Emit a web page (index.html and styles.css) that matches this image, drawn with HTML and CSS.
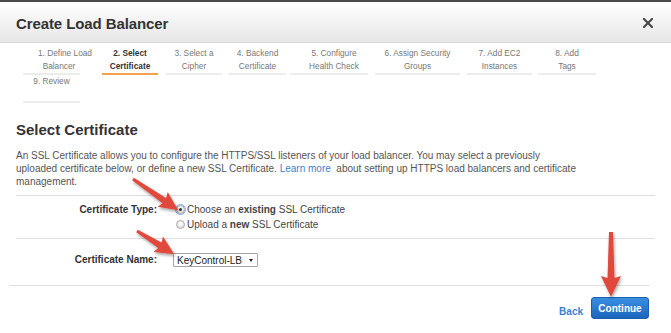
FILE: index.html
```html
<!DOCTYPE html>
<html lang="en">
<head>
<meta charset="utf-8">
<title>Create Load Balancer</title>
<link rel="stylesheet" href="styles.css">
</head>
<body>
<div class="modal">
  <header class="header">
    <h1 class="title">Create Load Balancer</h1>
    <button class="close" aria-label="Close">
      <svg width="10" height="10" viewBox="0 0 10 10"><path d="M1 1 L9 9 M9 1 L1 9" stroke="#444" stroke-width="2" stroke-linecap="square"/></svg>
    </button>
  </header>

  <nav class="steps">
    <div class="step">1. Define Load<br>Balancer</div>
    <div class="step active">2. Select<br>Certificate</div>
    <div class="step">3. Select a<br>Cipher</div>
    <div class="step">4. Backend<br>Certificate</div>
    <div class="step">5. Configure<br>Health Check</div>
    <div class="step">6. Assign Security<br>Groups</div>
    <div class="step">7. Add EC2<br>Instances</div>
    <div class="step">8. Add<br>Tags</div>
    <div class="step">9. Review</div>
  </nav>

  <main class="content">
    <h2 class="section-title">Select Certificate</h2>
    <p class="intro">An SSL Certificate allows you to configure the HTTPS/SSL listeners of your load balancer. You may select a previously<br>uploaded certificate below, or define a new SSL Certificate. <a class="link" href="#">Learn more</a>&nbsp; about setting up HTTPS load balancers and certificate<br>management.</p>

    <div class="form">
      <div class="form-row type-row">
        <div class="label">Certificate Type:</div>
        <div class="field">
          <div class="radio-line"><span class="radio checked"></span><span>Choose an <b>existing</b> SSL Certificate</span></div>
          <div class="radio-line"><span class="radio"></span><span>Upload a <b>new</b> SSL Certificate</span></div>
        </div>
      </div>
      <div class="form-row name-row">
        <div class="label">Certificate Name:</div>
        <div class="field">
          <div class="select"><span>KeyControl-LB</span><span class="caret"></span></div>
        </div>
      </div>
    </div>
  </main>

  <footer class="footer">
    <a class="back" href="#">Back</a>
    <button class="continue">Continue</button>
  </footer>

  <svg class="callouts" width="671" height="333" viewBox="0 0 671 333">
    <defs>
      <filter id="shadow" x="-30%" y="-30%" width="160%" height="160%">
        <feDropShadow dx="1" dy="2" stdDeviation="1.4" flood-color="#000" flood-opacity="0.35"/>
      </filter>
    </defs>
    <g fill="#e2483d" filter="url(#shadow)">
      <polygon transform="translate(133 179) rotate(34.6)" points="0,-1.5 38,-3.2 36,-9 55,0 36,9 38,3.2 0,1.5"/>
      <polygon transform="translate(137 231) rotate(32)" points="0,-1.5 27,-3.2 25,-9 44,0 25,9 27,3.2 0,1.5"/>
      <polygon transform="translate(611 232) rotate(90)" points="0,-2 46,-3.5 44,-10 65,0 44,10 46,3.5 0,2"/>
    </g>
  </svg>
</div>
</body>
</html>
```

FILE: styles.css
```css
html, body {
  margin: 0;
  padding: 0;
  background: #fff;
}

body {
  width: 671px;
  height: 333px;
  overflow: hidden;
  font-family: "Liberation Sans", Arial, sans-serif;
  color: #444;
}

.modal {
  position: relative;
  width: 671px;
  height: 333px;
  border-top: 2px solid #4a4a4a;
  box-sizing: border-box;
}

.header {
  height: 40px;
  border-bottom: 1px solid #d9d9d9;
  background: linear-gradient(#ffffff, #e6e6e6);
  display: flex;
  align-items: center;
  justify-content: space-between;
  padding: 2px 18px 0 16px;
  box-sizing: content-box;
  height: 38px;
}

.title {
  margin: 0;
  font-size: 15px;
  font-weight: bold;
  color: #333;
  letter-spacing: -0.1px;
}

.close {
  border: 0;
  background: none;
  padding: 0;
  width: 10px;
  height: 10px;
  display: flex;
}

.steps {
  display: flex;
  flex-wrap: wrap;
  width: 620px;
  margin: 4px 0 0 23px;
}

.step {
  box-sizing: border-box;
  height: 28px;
  line-height: 13px;
  border-bottom: 2px solid #ececec;
  text-align: center;
  font-size: 8.3px;
  color: #777;
  white-space: nowrap;
  margin-right: 7px;
}

.step.active {
  color: #333;
  font-weight: bold;
  border-bottom-color: #f5a04a;
}

.step:nth-child(1) { width: 57px; padding-left: 15px; margin-right: 22px; }
.step:nth-child(2) { width: 56px; margin-right: 8px; }
.step:nth-child(3) { width: 56px; }
.step:nth-child(4) { width: 57px; margin-right: 4px; }
.step:nth-child(5) { width: 78px; padding-left: 10px; }
.step:nth-child(6) { width: 85px; }
.step:nth-child(7) { width: 65px; margin-right: 6px; }
.step:nth-child(8) { width: 58px; }
.step:nth-child(9) { width: 57px; }

.content {
  padding: 0 16px;
}

.section-title {
  margin: 18px 0 0;
  font-size: 15px;
  line-height: 18px;
  font-weight: bold;
  color: #333;
}

.intro {
  margin: 10px 0 0;
  font-size: 10px;
  line-height: 13px;
  color: #555;
}

.link {
  color: #3a7fcf;
  text-decoration: none;
}

.form {
  margin-top: 7px;
  width: 639px;
}

.form-row {
  display: flex;
  column-gap: 15px;
  border-top: 1px solid #dedede;
}

.type-row {
  padding: 6px 0;
}

.name-row {
  padding: 14px 0 0;
  height: 32px;
  box-sizing: content-box;
}

.label {
  width: 141px;
  padding-right: 1px;
  text-align: right;
  font-size: 10px;
  font-weight: bold;
  color: #333;
  line-height: 15px;
}

.name-row .label {
  line-height: 14px;
}

.field {
  font-size: 10px;
  color: #444;
}

.radio-line {
  display: flex;
  align-items: center;
  height: 15px;
  gap: 2px;
  padding-left: 3px;
}

.radio {
  width: 9px;
  height: 9px;
  box-sizing: border-box;
  border-radius: 50%;
  border: 1px solid #a8a8a8;
  background: radial-gradient(circle at 50% 35%, #ffffff, #d6d6d6);
  position: relative;
}

.radio.checked {
  outline: 1px solid #7fa9e0;
  outline-offset: 0;
}

.radio.checked::after {
  content: "";
  position: absolute;
  left: 2px;
  top: 2px;
  width: 3px;
  height: 3px;
  border-radius: 50%;
  background: #333;
}

.select {
  width: 85px;
  height: 14px;
  box-sizing: border-box;
  border: 1px solid #a6a6a6;
  border-radius: 1px;
  background: #fff;
  display: flex;
  align-items: center;
  justify-content: space-between;
  padding: 0 4px 0 3px;
  font-size: 10px;
  color: #222;
}

.caret {
  width: 0;
  height: 0;
  border-left: 2.5px solid transparent;
  border-right: 2.5px solid transparent;
  border-top: 3.5px solid #222;
}

.footer {
  margin-left: 9px;
  width: 640px;
  border-top: 1px solid #dedede;
  padding-top: 11px;
  display: flex;
  justify-content: flex-end;
  align-items: flex-end;
  gap: 8px;
}

.back {
  font-size: 10px;
  font-weight: bold;
  color: #3a7fcf;
  text-decoration: none;
  line-height: 13px;
  padding-bottom: 1px;
}

.continue {
  width: 58px;
  height: 22px;
  box-sizing: border-box;
  border: 1px solid #1d5fae;
  border-radius: 3px;
  background: linear-gradient(#3a8fe2, #1b66bd);
  color: #fff;
  font-family: "Liberation Sans", Arial, sans-serif;
  font-size: 10px;
  font-weight: bold;
  padding: 0;
}

.callouts {
  position: absolute;
  left: 0;
  top: -2px;
  pointer-events: none;
}
```
